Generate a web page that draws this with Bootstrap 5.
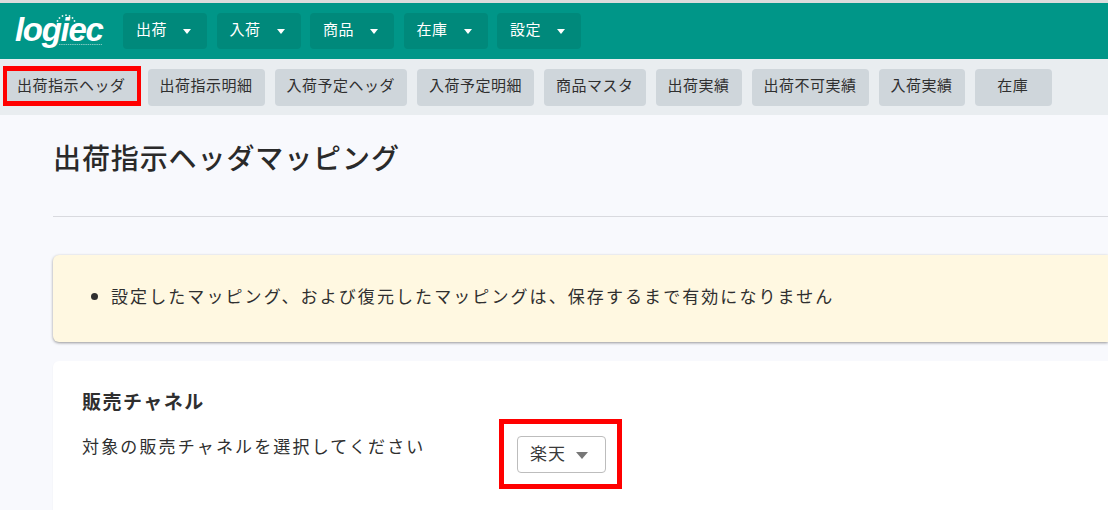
<!DOCTYPE html>
<html lang="ja">
<head>
<meta charset="utf-8">
<link href="https://cdn.jsdelivr.net/npm/bootstrap@5.3.0/dist/css/bootstrap.min.css" rel="stylesheet">
<style>
html,body{height:510px;overflow:hidden}
body{background:#f8f9fd;color:#2f2f2f;font-family:"Noto Sans CJK JP","Noto Sans",sans-serif;border-top:3px solid #dcdcdc;width:1108px}
.top-bar{background:#009688;height:56px;padding:10px 0 0 15px;gap:9.5px}
.logo-mark{width:98.5px;height:36px;display:block;overflow:visible}
.logo-word{font:italic 700 33px "Liberation Sans",sans-serif;letter-spacing:-1.3px;fill:#fff}
.menu-btn{background:#00897b;color:#fff;width:84px;height:36px;border-radius:4px;font-size:15px;letter-spacing:.6px;padding:0 16px 4px 13px;border:0}
.menu-caret{border:4px solid transparent;border-top:5px solid #fff;border-bottom:0;width:0;height:0;margin-top:4px}
.sub-bar{background:#e9edf0;height:56px;padding:10px 0 0 5px;gap:9.6px}
.tab-btn{position:relative;background:#cfd6db;color:#2f2f2f;height:37px;border:0;border-radius:4px;font-size:15px;letter-spacing:.5px;padding:0 12.400px 5px 12px;white-space:nowrap}
.tab-last{width:77px}
.red-frame{position:absolute;border:solid #f00;pointer-events:none}
.frame-tab{left:-2px;right:-3px;top:-3px;bottom:0;border-width:5px 4px}
.frame-pick{left:-19px;right:-17px;top:-18px;bottom:-17px;border-width:5px}
.page-body{padding-left:53px;height:395px}
.page-title{font-size:28px;font-weight:500;margin:0;line-height:40px;padding-top:22px;padding-bottom:1px;letter-spacing:.9px;color:#2a2a2a}
.title-rule{border:0;border-top:1px solid #d9dadf;opacity:1;margin:38px 0}
.note-box{background:#fff8e1;height:87px;border-radius:6px 0 0 6px;box-shadow:0 1px 3px rgba(0,0,0,.4);font-size:17px;letter-spacing:2.08px;padding:0 0 5px 58px}
.note-list{margin:0;padding:0}
.panel-box{background:#fff;border-radius:6px 0 0 0;margin-top:19px;height:149px;padding:25px 29px 0;box-shadow:0 1px 2px rgba(0,0,0,.05)}
.panel-title{font-size:19px;font-weight:700;line-height:30px;letter-spacing:1.5px;margin:0 0 20px}
.panel-label{font-size:17px;letter-spacing:2.15px;width:435px;line-height:20px;white-space:nowrap}
.pick-box{position:relative;border:1px solid #bdbdbd;border-radius:4px;height:37px;width:89px;padding:0 0 3px 12px;font-size:17px;letter-spacing:1px;gap:10px;color:#3a3a3a}
.pick-caret{border:6px solid transparent;border-top:7px solid #777;border-bottom:0;width:0;height:0;margin-top:5px}
</style>
</head>
<body>
<div class="top-bar d-flex align-items-start">
<svg class="logo-mark" viewBox="0 0 98.5 36" aria-label="logiec">
<text class="logo-word" x="0" y="28">logiec</text>
<g fill="#dff3f0"><circle cx="42.500" cy="8" r=".9"/><circle cx="44.500" cy="5" r=".9"/><circle cx="47.500" cy="3" r=".9"/><circle cx="51" cy="2.200" r=".9"/><circle cx="54.500" cy="3" r=".9"/><circle cx="57.500" cy="5" r=".9"/><circle cx="59.500" cy="8" r=".9"/></g>
<line x1="44" y1="31.500" x2="87" y2="31.500" stroke="#cfe9e5" stroke-width="1" stroke-dasharray="1.500 .7" opacity=".6"/>
</svg>
<div class="menu-btn d-flex align-items-center justify-content-between"><span>出荷</span><i class="menu-caret"></i></div>
<div class="menu-btn d-flex align-items-center justify-content-between"><span>入荷</span><i class="menu-caret"></i></div>
<div class="menu-btn d-flex align-items-center justify-content-between"><span>商品</span><i class="menu-caret"></i></div>
<div class="menu-btn d-flex align-items-center justify-content-between"><span>在庫</span><i class="menu-caret"></i></div>
<div class="menu-btn d-flex align-items-center justify-content-between"><span>設定</span><i class="menu-caret"></i></div>
</div>
<div class="sub-bar d-flex align-items-start">
<button class="tab-btn">出荷指示ヘッダ<span class="red-frame frame-tab"></span></button>
<button class="tab-btn">出荷指示明細</button>
<button class="tab-btn">入荷予定ヘッダ</button>
<button class="tab-btn">入荷予定明細</button>
<button class="tab-btn">商品マスタ</button>
<button class="tab-btn">出荷実績</button>
<button class="tab-btn">出荷不可実績</button>
<button class="tab-btn">入荷実績</button>
<button class="tab-btn tab-last">在庫</button>
</div>
<div class="page-body">
<h1 class="page-title">出荷指示ヘッダマッピング</h1>
<hr class="title-rule">
<div class="note-box d-flex align-items-center">
<ul class="note-list"><li>設定したマッピング、および復元したマッピングは、保存するまで有効になりません</li></ul>
</div>
<div class="panel-box">
<p class="panel-title">販売チャネル</p>
<div class="d-flex align-items-start">
<div class="panel-label">対象の販売チャネルを選択してください</div>
<div class="pick-box d-flex align-items-center"><span>楽天</span><i class="pick-caret"></i><span class="red-frame frame-pick"></span></div>
</div>
</div>
</div>
</body>
</html>
